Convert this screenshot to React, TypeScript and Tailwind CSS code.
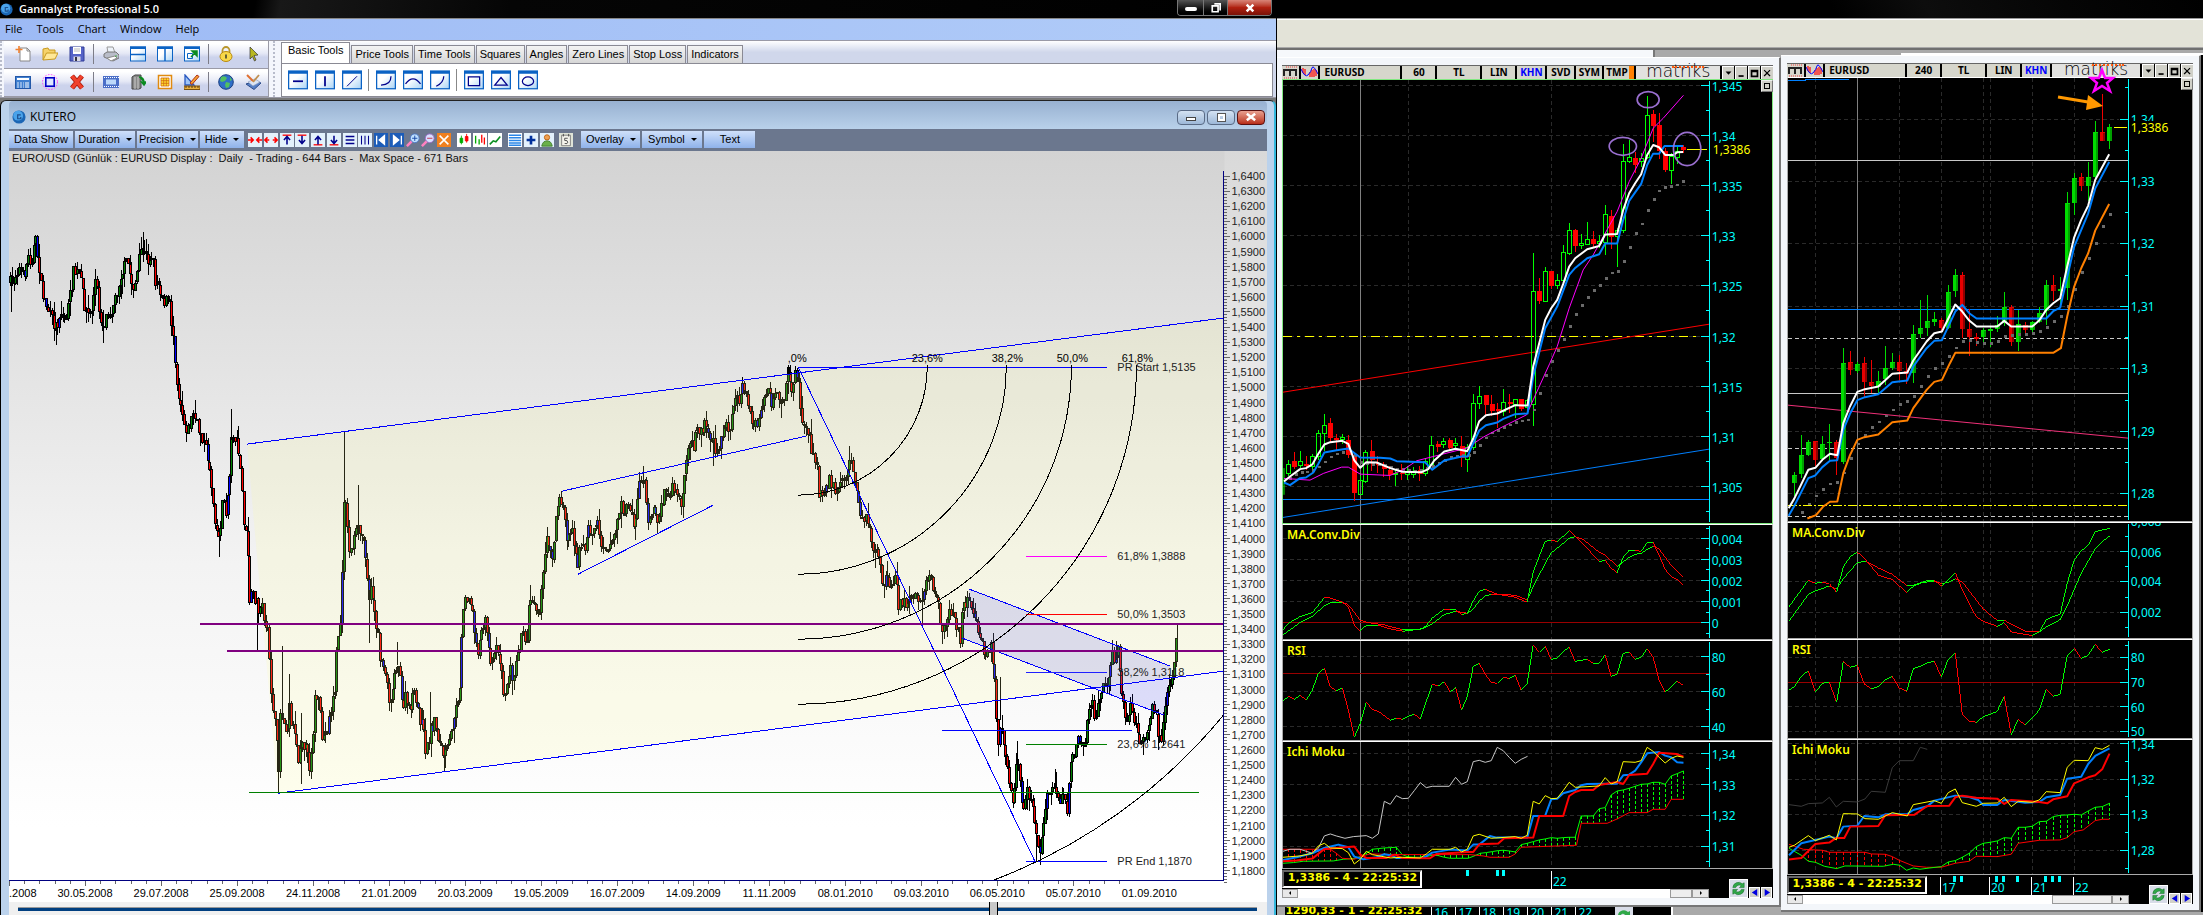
import { useId, type ReactNode } from "react";
import { clsx } from "clsx";

type Pt = [number, number];
// high, body top, body bottom, low, 1 = up / 0 = down
type Bar = [number, number, number, number, 0 | 1];

const parsePoints = (s: string): Pt[] =>
  s.split(" ").map((p) => p.split(",").map(Number) as Pt);

/* ---------- daily chart data ---------- */

const DAILY = parsePoints(
  "9,283 11,284 14,278 18,267 23,277 28,257 31,260 35,240 39,267 41,290 47,307 51,320 56,327 60,310 65,320 69,303 73,273 79,273 84,303 89,317 92,307 96,275 98,307 103,327 107,312 112,307 116,297 120,275 124,268 127,260 131,282 134,287 137,273 141,247 145,257 148,260 152,252 155,280 159,282 163,300 169,302 171,320 174,340 176,373 178,393 181,403 184,423 188,430 193,413 198,430 201,432 205,447 209,463 212,493 216,527 219,540 222,500 226,513 229,477 232,427 235,440 238,450 241,477 244,523 247,547 249,600 253,597 256,597 258,617 260,600 265,620 268,637 270,680 273,707 276,740 278,775 280,713 284,717 287,740 288,697 292,727 295,730 298,760 301,733 305,747 309,767 312,740 315,693 319,707 322,740 327,730 331,707 335,687 337,640 340,623 342,573 344,477 346,507 348,547 351,550 355,537 358,530 362,537 365,547 369,597 372,590 376,623 380,657 384,663 386,677 389,697 393,690 395,663 398,663 402,707 406,697 409,713 413,693 417,707 422,727 426,753 431,727 435,720 439,743 444,757 448,747 452,727 456,700 460,690 462,617 464,593 467,597 471,607 473,613 476,647 479,653 482,623 486,623 489,653 492,663 495,640 499,657 503,690 506,697 510,657 513,680 516,653 522,637 527,637 529,597 533,597 538,613 541,597 544,563 546,543 549,540 553,560 555,520 560,497 564,513 567,540 571,527 575,543 577,567 580,548 584,550 588,530 593,530 597,520 600,540 607,547 612,540 616,527 620,507 627,510 631,507 634,527 637,507 639,480 642,477 645,487 647,517 651,513 654,500 657,527 661,507 665,490 669,497 673,487 677,500 681,500 684,487 686,460 690,450 694,443 698,427 702,433 705,420 708,433 713,443 717,457 720,443 726,423 729,427 733,400 738,400 743,387 746,387 749,413 752,427 757,427 761,407 765,393 769,390 771,410 776,397 781,407 785,397 788,370 791,390 795,375 798,373 800,407 804,430 808,433 812,450 816,460 818,490 821,498 824,487 829,480 833,488 838,487 842,480 845,487 847,463 852,463 856,487 860,520 864,517 867,523 870,533 873,557 877,543 880,570 882,590 886,573 890,593 895,577 898,607 902,600 907,607 910,593 914,593 919,600 922,597 927,577 931,577 935,600 939,610 942,640 946,620 952,607 955,620 960,637 963,607 968,597 971,613 977,627 981,643 986,660 990,643 993,660 995,693 998,740 1000,720 1004,740 1007,767 1009,787 1012,807 1014,787 1017,753 1020,787 1023,807 1026,790 1030,800 1033,807 1036,830 1037,850 1040,847 1043,827 1047,797 1052,787 1056,787 1060,797 1063,787 1067,810 1069,773 1073,757 1077,743 1081,740 1084,750 1087,713 1090,700 1093,703 1095,727 1098,703 1102,690 1107,683 1111,657 1116,657 1118,650 1122,700 1126,720 1131,707 1135,727 1139,743 1144,733 1148,733 1152,710 1156,713 1158,737 1162,737 1166,700 1170,680 1173,673 1176,643 1177,634",
);

const SPIKES: [number, number, number][] = [
  [11, 275, 312], [56, 322, 345], [143, 232, 262], [103, 310, 343], [219, 535, 557],
  [231, 409, 440], [257, 600, 651], [278, 740, 793], [282, 646, 720], [289, 674, 720],
  [301, 713, 784], [344, 432, 500], [358, 485, 540], [369, 590, 643], [430, 692, 740],
  [444, 745, 771], [713, 440, 466], [1000, 677, 720], [1017, 741, 770], [1036, 840, 861],
  [1055, 769, 790], [1116, 641, 660], [1177, 625, 640], [397, 642, 665], [922, 588, 623],
];

const buildDaily = () => {
  const bars: { x: number; top: number; size: number; h: number; l: number; fill: string }[] = [];
  let seed = 7;
  const rnd = () => {
    seed = (seed * 16807) % 2147483647;
    return seed / 2147483647;
  };
  let k = 0;
  let prev = DAILY[0][1];
  for (let i = 0; i < 644; i++) {
    const x = 10 + i * 1.813;
    while (k < DAILY.length - 2 && DAILY[k + 1][0] < x) k++;
    const [x0, y0] = DAILY[k];
    const [x1, y1] = DAILY[k + 1];
    const t = Math.min(1, Math.max(0, (x - x0) / (x1 - x0)));
    const c = y0 + (y1 - y0) * t + (rnd() - 0.5) * 15;
    const h = Math.min(prev, c) - rnd() * rnd() * 16;
    const l = Math.max(prev, c) + rnd() * rnd() * 16;
    const fill = rnd() > 0.87 ? "#0000ff" : c < prev ? "#008000" : "#ff0000";
    bars.push({
      x: Math.round(x),
      top: Math.round(Math.min(prev, c)),
      size: Math.max(2, Math.round(Math.abs(prev - c))),
      h,
      l,
      fill,
    });
    prev = c;
  }
  return bars;
};

const DAILY_BARS = buildDaily();

const DATES = [
  "30.05.2008", "29.07.2008", "25.09.2008", "24.11.2008", "21.01.2009", "20.03.2009",
  "19.05.2009", "16.07.2009", "14.09.2009", "11.11.2009", "08.01.2010", "09.03.2010",
  "06.05.2010", "05.07.2010", "01.09.2010",
];

const RETRACE = [
  { y: 556, color: "#ff00ff", label: "61,8% 1,3888" },
  { y: 614, color: "#ff0000", label: "50,0% 1,3503" },
  { y: 672, color: "#2020ff", label: "38,2% 1,3118" },
  { y: 744, color: "#008000", label: "23,6% 1,2641" },
  { y: 861, color: "#0000ff", label: "PR End 1,1870" },
];

const DailyChart = () => (
  <svg
    viewBox="9 151 1258 751"
    className="block w-full bg-gradient-to-b from-[#d3d3d3] from-0% via-[#f3f3f3] via-55% to-white to-90% font-['Liberation_Sans',Arial,sans-serif] text-[11px]"
  >
    <rect x={1224} y={151} width={43} height={751} fill="#fff" opacity={0.15} />
    <g shapeRendering="crispEdges">
      {DAILY_BARS.map((b, i) => (
        <g key={i}>
          <rect x={b.x} y={b.h} width={1} height={b.l - b.h} />
          <rect x={b.x - 1} y={b.top} width={3} height={b.size} />
        </g>
      ))}
      {DAILY_BARS.filter((b) => b.size > 4).map((b, i) => (
        <rect key={i} x={b.x} y={b.top + 1} width={1} height={b.size - 2} fill={b.fill} />
      ))}
      {SPIKES.map(([x, a, b]) => (
        <rect key={x} x={x} y={a} width={1} height={b - a} />
      ))}
      <rect x={787} y={367} width={4} height={8} />
    </g>

    <polygon points="247,444 1223,318 1223,670 278,793" fill="#ffff8a" opacity={0.15} />
    <polygon points="969,589 1170,666 1164,715 962,638" fill="#1010ff" opacity={0.12} />

    <g fill="none" stroke="#0000ff" shapeRendering="crispEdges">
      <path d="M247 444L1223 318M278 793L1223 671M562 491L806 436M578 574L713 505" />
      <path d="M798 367L1035 862M969 589L1170 666M962 638L1164 715M942 730.5H1132M798 367.5H1107" />
      <path d="M227 651H1223M200 624H1223" stroke="#800080" strokeWidth={2} />
      <path d="M249 792.5H1199" stroke="#008000" />
      {RETRACE.map((r) => (
        <path key={r.y} d={`M1026 ${r.y + 0.5}H1107`} stroke={r.color} />
      ))}
    </g>

    <g fill="none" stroke="#000" shapeRendering="crispEdges">
      {[129, 208, 273, 338].map((r) => (
        <path key={r} d={`M${798 + r} 365A${r} ${r} 0 0 1 798 ${366 + r}`} />
      ))}
      <path d="M1223 715A549 549 0 0 1 993 880" />
    </g>

    <g textAnchor="middle" fill="#000">
      {[[797, ",0%"], [927, "23,6%"], [1007, "38,2%"], [1072, "50,0%"], [1137, "61,8%"]].map(
        ([x, t]) => (
          <text key={t} x={x} y={362}>{t}</text>
        ),
      )}
      {DATES.map((d, i) => (
        <text key={d} x={85 + i * 76} y={897}>{d}</text>
      ))}
    </g>
    <text x={9} y={897}>.2008</text>
    <g fill="#222">
      <text x={1117} y={371}>PR Start 1,5135</text>
      {RETRACE.map((r) => (
        <text key={r.label} x={1117} y={r.y + 4}>{r.label}</text>
      ))}
    </g>
    <text x={12} y={162} className="whitespace-pre" fill="#111">
      {"EURO/USD (Günlük : EURUSD Display :  Daily  - Trading - 644 Bars -  Max Space - 671 Bars"}
    </text>

    <g shapeRendering="crispEdges">
      <path d="M1223.5 171V880M9 880.5H1224" stroke="#000080" />
      {Array.from({ length: 47 }, (_, i) => (
        <g key={i}>
          <path
            d={`M1224 ${176 + i * 15.1}h6M1224 ${179 + i * 15.1}h3M1224 ${182 + i * 15.1}h3M1224 ${185 + i * 15.1}h3M1224 ${188 + i * 15.1}h3`}
            stroke="#666"
          />
          <text x={1231} y={180 + i * 15.1} fill="#222">
            {(1.64 - i * 0.01).toFixed(4).replace(".", ",")}
          </text>
        </g>
      ))}
      {Array.from({ length: 74 }, (_, i) => (
        <path key={i} d={`M${9.5 + i * 15.2} 881v${i % 5 === 0 ? 5 : 3}`} stroke="#666" />
      ))}
    </g>
  </svg>
);

/* ---------- icons ---------- */

const Orb = ({ className }: { className: string }) => (
  <svg viewBox="0 0 16 16" className={className}>
    <circle cx={8} cy={8} r={7.5} fill="#1b66b5" />
    <circle cx={7} cy={6.5} r={5.6} fill="#4aa3ea" />
    <path d="M10 5.5H6.5v4.5H10V8" fill="none" stroke="#1d4f8f" strokeWidth={1.4} />
  </svg>
);

const Ico = ({ children, size = "size-4" }: { children: ReactNode; size?: string }) => (
  <svg viewBox="0 0 16 16" className={clsx("block shrink-0", size)}>
    {children}
  </svg>
);

const Framed = ({ children, size = "size-4" }: { children: ReactNode; size?: string }) => {
  const id = useId();
  return (
    <Ico size={size}>
      <defs>
        <linearGradient id={id} x1="0" y1="0" x2="1" y2="1">
          <stop offset="0.4" stopColor="#fff" />
          <stop offset="1" stopColor="#a9d3f5" />
        </linearGradient>
      </defs>
      <rect x={0.5} y={1} width={15} height={14} fill={`url(#${id})`} stroke="#0a62c4" />
      <rect x={0} y={0.5} width={16} height={2.5} fill="#0a62c4" />
      {children}
    </Ico>
  );
};

const ROW_ONE: (ReactNode | null)[] = [
  <Ico><path d="M5 2h7l3 3v10H5z" fill="#fff" stroke="#888" /><path d="M12 2v3h3" fill="none" stroke="#888" /><path d="M4 0v7M.5 3.5h7" stroke="#f08030" strokeWidth={1.6} /></Ico>,
  <Ico><path d="M1 14V3l5-1 1 2h6v3" fill="#f6d36b" stroke="#c89a20" /><path d="M1 14L4.5 7H16l-3 6z" fill="#ffe897" stroke="#c89a20" /></Ico>,
  <Ico><path d="M1 1h14v14H1z" fill="#5563c8" stroke="#303c96" /><path d="M4 1h8v7H4z" fill="#fff" /><path d="M5 3h6M5 5h6" stroke="#bbb" /><path d="M4.500 10.500h7V15h-7z" fill="#d8d8e4" /><path d="M6 11h2v4H6z" fill="#334" /></Ico>,
  null,
  <Ico><path d="M5 7L4 1h6l2 6" fill="#eef3fa" stroke="#999" /><path d="M1 8l3-2h9l3 3v3l-6 3-9-4z" fill="#b9bdc9" stroke="#777" /><path d="M4 12l8-2 2 2-6 3z" fill="#fff" stroke="#888" /><circle cx={13} cy={10} r={0.8} fill="#3a3" /></Ico>,
  <Framed><path d="M0 8.500h16" stroke="#0a62c4" strokeWidth={1.5} /></Framed>,
  <Framed><path d="M8 2v13" stroke="#0a62c4" strokeWidth={1.5} /></Framed>,
  <Framed><path d="M3.500 7.500h5v5h-5z" fill="none" stroke="#0a62c4" /><path d="M7 11l4-4M8 5h5v5z" stroke="#0a8a20" fill="#0a8a20" strokeWidth={1.5} /></Framed>,
  null,
  <Ico><path d="M4.500 7V4.500a3.500 3.500 0 017 0V7" fill="none" stroke="#b8962c" strokeWidth={1.8} /><ellipse cx={8} cy={10.500} rx={6} ry={5} fill="#f8d848" stroke="#b88a10" /><path d="M8 8.500v4" stroke="#553" strokeWidth={1.8} /></Ico>,
  <Ico><path d="M5 1l8 8-4 .5L11 14l-1.500 1L7.500 10.500 5 13z" fill="#b8b820" stroke="#333" strokeWidth={0.7} /></Ico>,
];

const ROW_TWO: (ReactNode | null)[] = [
  <Ico><rect x={0.5} y={2.500} width={15} height={12} fill="#3f7fd0" stroke="#2358a8" /><path d="M2 5h12" stroke="#fff" strokeWidth={2} /><path d="M2 9h7M2 11h7M2 13h7" stroke="#dbe8fa" strokeDasharray="2 1" /><path d="M10 9h4M10 11h4M10 13h4" stroke="#fff" /></Ico>,
  <Ico><circle cx={8} cy={8} r={7.500} fill="none" stroke="#ff40ff" strokeDasharray="1.500 1.500" /><rect x={3.800} y={3.800} width={8.400} height={8.400} fill="#dfe6ff" stroke="#0000c8" strokeWidth={1.600} /></Ico>,
  <Ico><path d="M3 2l10 12M13 2L3 14" stroke="#a81808" strokeWidth={5} /><path d="M3 2l10 12M13 2L3 14" stroke="#f0412c" strokeWidth={3.500} /></Ico>,
  null,
  <Ico><rect y={2} width={16} height={12} fill="#4a6ec8" /><path d="M3 5.500h10v5H3z" fill="#bcd8fa" /><path d="M1 3.500h15M1 12.500h15" stroke="#fff" strokeDasharray="1 1" strokeWidth={1.200} /></Ico>,
  <Ico><path d="M2 3l3-2h6v13l-2 1H2z" fill="#888" stroke="#444" /><path d="M5 3v12M8 3v12" stroke="#ccc" /><path d="M9 3q5 0 5 6m-2.500-1l2.500 3 2-3z" fill="#0a8a20" stroke="#0a8a20" strokeWidth={1.600} /></Ico>,
  <Ico><rect x={1.500} y={1.500} width={13} height={13} fill="#fff" stroke="#e08a10" strokeWidth={1.500} /><path d="M4 4h8v8H4z" fill="#ffe030" /><path d="M4 6.700h8M4 9.300h8M6.700 4v8M9.300 4v8M4 4h8v8H4z" stroke="#d06810" strokeWidth={0.8} fill="none" /></Ico>,
  <Ico><path d="M1 1l9 10H1z" fill="#9fc4f4" stroke="#2858c0" strokeWidth={1.300} /><path d="M6 9l7-8 2 1.500-7 8z" fill="#f4a030" stroke="#b03018" /><path d="M0 12h16v3.500H0z" fill="#e8b040" stroke="#7a5010" /><path d="M2 12v2M5 12v2M8 12v2M11 12v2M14 12v2" stroke="#5a3808" /></Ico>,
  null,
  <Ico><circle cx={8} cy={8} r={7.300} fill="#2f6fc8" stroke="#1c3f80" /><path d="M3 3q4-2 6 1l-2 3-3 1-2-1zM8 8l4 1-1 4-3 1-1-3zM12 3l2 3-2 1z" fill="#52c060" /></Ico>,
  <Ico><path d="M1 10l9-3 6 2-7 6.500z" fill="#5580c8" stroke="#2c4a88" /><path d="M3 8l7-3 5 3-7 4z" fill="#dbe4f4" stroke="#8898b8" strokeWidth={0.6} /><path d="M2 1l6 6" stroke="#e07030" strokeWidth={2} /><path d="M14 1L8 8" stroke="#c09050" strokeWidth={1.800} /></Ico>,
];

const DRAW_TOOLS: (ReactNode | null)[] = [
  <path d="M4 9h8" strokeWidth={1.4} />,
  <path d="M8 5v8" strokeWidth={1.4} />,
  <path d="M4 13l8-8" strokeWidth={0.8} />,
  null,
  <path d="M12 5q0 7-8 7" />,
  <path d="M2 11q6-8 12 0" />,
  <path d="M11 5q0 5-6 8" />,
  null,
  <path d="M3.500 5.500h9v7h-9z" />,
  <path d="M8 6l5 6H3z" />,
  <ellipse cx={8} cy={9} rx={4.500} ry={3.500} />,
];

const ToolRow = ({ items }: { items: (ReactNode | null)[] }) => (
  <div className="flex h-7 items-center border-b border-[#9a9aa6] bg-gradient-to-b from-white from-10% via-[#e6e9f6] via-45% to-[#ccd3ec] to-60% pl-[5px]">
    {items.map((icon, i) =>
      icon === null ? (
        <span key={i} className="mx-[3px] h-5 w-px bg-[#7d7d88]" />
      ) : (
        <button key={i} type="button" className="flex w-[27px] justify-center">
          {icon}
        </button>
      ),
    )}
  </div>
);

const Grip = () => (
  <div className="w-1 shrink-0 self-stretch border-l-2 border-dotted border-[#b8bccb]" />
);

const arrowV = (up: boolean, barTop: boolean) => (
  <>
    <path d={barTop ? "M3 2.500h10" : "M3 13.500h10"} stroke="#f00" strokeWidth={1.500} />
    <path d={up ? "M8 13V4M4.500 8L8 4l3.500 4" : "M8 3v9M4.500 8L8 12l3.500-4"} stroke="#00008b" strokeWidth={1.800} fill="none" />
  </>
);

const CHART_ICONS: { bg: string; art: ReactNode }[] = [
  { bg: "bg-[#e3f1fc]", art: <path d="M0 8h5M3 5l3 3-3 3M16 8h-5M13 5l-3 3 3 3" stroke="#f00" strokeWidth={1.700} fill="none" /> },
  { bg: "bg-[#e3f1fc]", art: <path d="M1 8h5M10 8h5M4 5L1 8l3 3M12 5l3 3-3 3" stroke="#f00" strokeWidth={1.700} fill="none" /> },
  { bg: "bg-[#e3f1fc]", art: arrowV(true, true) },
  { bg: "bg-[#e3f1fc]", art: arrowV(false, true) },
  { bg: "bg-[#e3f1fc]", art: arrowV(true, false) },
  { bg: "bg-[#e3f1fc]", art: arrowV(false, false) },
  { bg: "bg-[#e3f1fc]", art: <path d="M3 4h10M3 8h10M3 12h10" stroke="#00008b" strokeWidth={1.500} /> },
  { bg: "bg-[#e3f1fc]", art: <path d="M4 3v10M8 3v10M12 3v10" stroke="#00008b" strokeWidth={1.200} /> },
  { bg: "bg-[#1c5cb8]", art: <path d="M3 3v10M12 3L6 8l6 5z" fill="#fff" stroke="#fff" strokeWidth={1.500} /> },
  { bg: "bg-[#1c5cb8]", art: <path d="M13 3v10M4 3l6 5-6 5z" fill="#fff" stroke="#fff" strokeWidth={1.500} /> },
  { bg: "", art: <><path d="M1 15l6-6" stroke="#ff80c0" strokeWidth={3} /><circle cx={10} cy={6} r={5} fill="#bfe0ff" stroke="#4a78c8" /><path d="M10 3v6M7 6h6" stroke="#1040a0" /></> },
  { bg: "", art: <><path d="M1 15l6-6" stroke="#ff80c0" strokeWidth={3} /><circle cx={10} cy={6} r={5} fill="#d8e0ff" stroke="#9a6ac8" /><path d="M7 6h6" stroke="#c02040" /></> },
  { bg: "bg-[#f08020]", art: <path d="M3 3l10 10M13 3L3 13" stroke="#fff" strokeWidth={1.800} /> },
  { bg: "bg-white ml-1", art: <><path d="M5 3v10M3.500 6h3v5h-3z" fill="#0a0" stroke="#0a0" /><path d="M11 1v10M9.500 4h3v5h-3z" fill="#f00" stroke="#f00" /></> },
  { bg: "bg-white", art: <><path d="M3 3v9M7 7v6" stroke="#0a0" strokeWidth={1.500} /><path d="M10 2v9M13 5v8" stroke="#f00" strokeWidth={1.500} /></> },
  { bg: "bg-white", art: <path d="M2 13l4-4 3 1 5-6" fill="none" stroke="#0a9020" strokeWidth={1.800} /> },
  { bg: "bg-white ml-1", art: <path d="M1 2.500h14M1 5.500h14M1 8.500h14M1 11.500h14M1 14h14" stroke="#2a86e8" strokeWidth={1.700} /> },
  { bg: "bg-[#e3f1fc]", art: <path d="M8 3v10M3 8h10" stroke="#00309b" strokeWidth={3} /> },
  { bg: "bg-[#e3f1fc]", art: <><circle cx={8} cy={5} r={3} fill="#f0a050" stroke="#b86010" /><path d="M2 15q1-6 6-6t6 6z" fill="#6ab04a" stroke="#3a7a28" /></> },
  { bg: "bg-[#dfe4d8] ml-1", art: <><path d="M3 2.500h10v12H3z" fill="#f4f4ec" stroke="#777" /><path d="M10 6H6.500v2.500q3.500-.500 3.500 2t-3.500 1.500M5 1v3M11 1v3" fill="none" stroke="#444" /></> },
];

/* ---------- Gannalyst window ---------- */

const TABS = ["Basic Tools", "Price Tools", "Time Tools", "Squares", "Angles", "Zero Lines", "Stop Loss", "Indicators"];

const DropButton = ({ label, width, arrow = true }: { label: string; width: string; arrow?: boolean }) => (
  <button
    type="button"
    className={clsx(
      "flex h-[17px] items-center justify-center gap-1.5 bg-gradient-to-b from-[#cfe0fa] to-[#8fb2ea] text-[11px] leading-none whitespace-nowrap",
      width,
    )}
  >
    {label}
    {arrow && <span className="border-x-[3px] border-t-[3px] border-x-transparent border-t-black" />}
  </button>
);

const Gannalyst = () => (
  <section className="flex min-w-0 flex-[1277] flex-col border-r border-black bg-white font-['Liberation_Sans',Arial,sans-serif] text-[11px] text-black">
    <header className="flex h-[19px] items-start justify-between border-b border-[#888] bg-[linear-gradient(100deg,#000_20%,#181818_22%,#050505_40%,#000)] pr-1">
      <div className="flex h-[19px] items-center gap-1.5 font-['Open_Sans',sans-serif] text-[11px] font-semibold text-white">
        <Orb className="size-[13px]" />
        Gannalyst Professional 5.0
      </div>
      <div className="flex h-4 overflow-hidden rounded-b border border-t-0 border-[#777]">
        <button type="button" aria-label="Minimize" className="flex w-[25px] items-end justify-center bg-gradient-to-b from-[#555] to-black pb-1">
          <span className="h-1 w-3 rounded-sm bg-white" />
        </button>
        <button type="button" aria-label="Restore" className="flex w-[25px] items-center justify-center border-x border-[#777] bg-gradient-to-b from-[#555] to-black">
          <svg viewBox="0 0 12 12" className="size-[10px]"><path d="M4 1h7v8M1.500 3.500h7v7h-7z" fill="none" stroke="#fff" strokeWidth={2} /></svg>
        </button>
        <button type="button" aria-label="Close" className="flex w-[43px] items-center justify-center bg-gradient-to-b from-[#d88478] via-[#b02010] to-[#7a1208]">
          <svg viewBox="0 0 12 12" className="size-[10px]"><path d="M2 2l8 8M10 2l-8 8" stroke="#fff" strokeWidth={3} /></svg>
        </button>
      </div>
    </header>

    <nav className="flex h-[21px] items-center gap-[14px] bg-gradient-to-r from-[#9dbaf5] to-[#b1ccf8] pl-[5px] font-['Open_Sans',sans-serif] text-[11px] font-medium">
      {["File", "Tools", "Chart", "Window", "Help"].map((m) => (
        <button key={m} type="button">{m}</button>
      ))}
    </nav>

    <div className="flex border-y border-[#9a9aa6] bg-[#f4f6fc]">
      <Grip />
      <div className="w-[264px] shrink-0">
        <ToolRow items={ROW_ONE} />
        <ToolRow items={ROW_TWO} />
      </div>
      <div className="w-px bg-[#9a9aa6]" />
      <div className="flex w-3 pl-1"><Grip /></div>
      <div className="flex min-w-0 flex-1 flex-col bg-gradient-to-b from-white to-[#d0d7eb] to-20% pr-[3px]">
        <div className="flex h-[22px] items-end gap-px" role="tablist">
          {TABS.map((t, i) => (
            <button
              key={t}
              type="button"
              role="tab"
              aria-selected={i === 0}
              className={clsx(
                "border border-b-0 border-[#8a8a94] leading-none whitespace-nowrap",
                i === 0
                  ? "h-[21px] bg-white px-[6px] pb-1"
                  : "h-[18px] bg-gradient-to-b from-[#f4f4f4] to-[#d6d6d6] px-[3px]",
              )}
            >
              {t}
            </button>
          ))}
        </div>
        <div className="flex flex-1 items-center border border-[#8a8a94] bg-white pl-[2px]">
          {DRAW_TOOLS.map((art, i) =>
            art === null ? (
              <span key={i} className="mx-[3px] h-[22px] w-px bg-[#888]" />
            ) : (
              <button key={i} type="button" className="flex w-[27px] justify-center">
                <Framed size="size-5">
                  <g fill="none" stroke="#00008b" strokeWidth={1}>{art}</g>
                </Framed>
              </button>
            ),
          )}
        </div>
      </div>
    </div>

    <div className="flex flex-1 flex-col bg-[#777] pt-[2px]">
      <div className="flex flex-1 flex-col rounded-t-md border-t border-r-2 border-l border-t-[#222] border-r-[#35b8dc] border-l-black bg-[#bbd2ec] pr-[7px] pl-2">
        <div className="flex h-[28px] items-center justify-between rounded-t bg-gradient-to-b from-[#98b1d1] to-[#b9d1ea] pt-[5px] pr-[2px] pl-[3px]">
          <div className="flex items-center gap-1 font-['Open_Sans',sans-serif] text-[12px]">
            <Orb className="size-[14px]" />
            KUTERO
          </div>
          <div className="flex gap-[2px]">
            <button type="button" aria-label="Minimize chart" className="flex h-[15px] w-7 items-end justify-center rounded-sm border border-[#5a6b86] bg-gradient-to-b from-[#d4e2f2] to-[#9db8d8] pb-[3px]">
              <span className="h-[4px] w-[10px] border border-[#444] bg-white" />
            </button>
            <button type="button" aria-label="Maximize chart" className="flex h-[15px] w-7 items-center justify-center rounded-sm border border-[#5a6b86] bg-gradient-to-b from-[#d4e2f2] to-[#9db8d8]">
              <span className="size-[7px] border-2 border-white outline outline-[#555]" />
            </button>
            <button type="button" aria-label="Close chart" className="flex h-[15px] w-7 items-center justify-center rounded-sm border border-[#5a1010] bg-gradient-to-b from-[#e8a090] to-[#b82c18]">
              <svg viewBox="0 0 12 12" className="size-[10px]"><path d="M1 2l10 8M11 2L1 10" stroke="#fff" strokeWidth={3} /></svg>
            </button>
          </div>
        </div>

        <div className="flex h-[22px] items-center gap-[2px] bg-[#6b778e]">
          <DropButton label="Data Show" width="w-16" arrow={false} />
          <DropButton label="Duration" width="w-[60px]" />
          <DropButton label="Precision" width="w-[61px]" />
          <DropButton label="Hide" width="w-11" />
          <div className="flex flex-1 items-center justify-between pr-[6px] pl-[2px]">
            {CHART_ICONS.map((c, i) => (
              <button key={i} type="button" className={clsx("flex size-[14px] items-center justify-center", c.bg)}>
                <Ico size="size-[14px]">{c.art}</Ico>
              </button>
            ))}
          </div>
          <DropButton label="Overlay" width="w-[59px]" />
          <DropButton label="Symbol" width="w-[60px]" />
          <DropButton label="Text" width="w-[51px]" arrow={false} />
          <div className="w-[510px]" />
        </div>

        <DailyChart />

        <div className="flex h-[13px] items-center overflow-hidden bg-[#f0f0f0] pr-[10px] pl-[9px]">
          <input
            type="range"
            aria-label="Chart position"
            min={0}
            max={1000}
            defaultValue={789}
            className="h-1 w-full appearance-none border-t border-[#999] bg-[#003f80] [&::-webkit-slider-thumb]:h-5 [&::-webkit-slider-thumb]:w-[9px] [&::-webkit-slider-thumb]:appearance-none [&::-webkit-slider-thumb]:border [&::-webkit-slider-thumb]:border-black [&::-webkit-slider-thumb]:bg-[#c8c8c8]"
          />
        </div>
      </div>
    </div>
  </section>
);

/* ---------- Matriks windows ---------- */

// Plot shapes use a grid three times finer than the text around them.
type PanelProps = {
  x0: number;
  y0: number;
  width: number;
  height: number;
  axis: number;
  verticals: number[];
  cross: number;
  ticks: [number, string][];
  minor?: number[];
  title?: string;
  frame?: string;
  children: ReactNode;
  extra?: ReactNode;
};

const Panel = (p: PanelProps) => (
  <div className={clsx("border bg-black", p.frame ?? "border-t-white border-r-[#aaa] border-b-[#aaa] border-l-[#aaa]")}>
    <svg
      viewBox={`0 0 ${p.width} ${p.height}`}
      className={clsx("block w-full font-['Noto_Sans',sans-serif] text-[12px]", p.frame && "overflow-visible")}
    >
      <g transform={`scale(0.33333) translate(${-p.x0} ${-p.y0})`} fill="none" strokeWidth={3}>
        <g stroke="#2a2a2a" strokeDasharray="12 9" shapeRendering="crispEdges">
          {p.verticals.map((x) => (
            <path key={x} d={`M${x} ${p.y0}v${p.height * 3}`} />
          ))}
          {p.ticks.map(([y]) => (
            <path key={y} d={`M${p.x0} ${y}H${p.axis - 28}`} />
          ))}
        </g>
        <path d={`M${p.cross} ${p.y0}v${p.height * 3}`} stroke="#808080" shapeRendering="crispEdges" />
        {p.children}
        <g stroke="#00ffff" shapeRendering="crispEdges">
          <path d={`M${p.axis} ${p.y0 + 3}v${p.height * 3 - 6}`} />
          {p.ticks.map(([y]) => (
            <path key={y} d={`M${p.axis - 25} ${y}h25`} />
          ))}
          {p.minor?.map((y) => <path key={y} d={`M${p.axis - 10} ${y}h10`} />)}
        </g>
      </g>
      <g fill="#00ffff">
        {p.ticks.map(([y, t]) => (
          <text key={y} x={Math.round((p.axis + 9 - p.x0) / 3)} y={Math.round((y - p.y0) / 3) + 5}>
            {t}
          </text>
        ))}
      </g>
      {p.title && (
        <text x={4} y={14} fill="#ffff00" className="font-semibold">
          {p.title}
        </text>
      )}
      {p.extra}
    </svg>
  </div>
);

const Line = ({ pts, color, w = 3 }: { pts: string; color: string; w?: number }) => (
  <polyline points={pts} stroke={color} strokeWidth={w} strokeLinejoin="round" shapeRendering={w > 3 ? undefined : "crispEdges"} />
);

// green while rising, red while falling
const TrendLine = ({ pts }: { pts: string }) => {
  const list = parsePoints(pts);
  return (
    <g shapeRendering="crispEdges">
      {list.slice(1).map(([x, y], i) => (
        <path key={i} d={`M${list[i][0]} ${list[i][1]}L${x} ${y}`} stroke={y > list[i][1] ? "#ff0000" : "#00ff00"} />
      ))}
    </g>
  );
};

const Dots = ({ pts }: { pts: string }) => (
  <g fill="#6a6a6a" shapeRendering="crispEdges">
    {parsePoints(pts).map(([x, y]) => (
      <rect key={x} x={x - 4} y={y - 4} width={9} height={8} />
    ))}
  </g>
);

const Hatch = ({ top, bottom, color }: { top: string; bottom: string; color: string }) => {
  const b = parsePoints(bottom);
  const at = (x: number) => {
    const i = Math.max(1, b.findIndex((p) => p[0] >= x));
    const [x0, y0] = b[i - 1];
    const [x1, y1] = b[i];
    return y0 + ((y1 - y0) * (x - x0)) / (x1 - x0);
  };
  const t = parsePoints(top);
  return (
    <g stroke={color} strokeDasharray="9 6" shapeRendering="crispEdges">
      {t.map(([x, y]) => (
        <path key={x} d={`M${x} ${y}V${at(x)}`} />
      ))}
    </g>
  );
};

const HOURLY: Bar[] = [
  [1262, 1273, 1301, 1310, 1], [1236, 1263, 1281, 1288, 0], [1233, 1264, 1276, 1285, 1], [1248, 1272, 1280, 1290, 0],
  [1242, 1251, 1280, 1290, 1], [1170, 1180, 1250, 1262, 1], [1122, 1156, 1180, 1235, 1], [1134, 1150, 1196, 1210, 0],
  [1182, 1195, 1200, 1230, 0], [1182, 1192, 1200, 1212, 1], [1186, 1200, 1246, 1255, 0], [1240, 1246, 1360, 1383, 0],
  [1310, 1321, 1363, 1363, 1], [1230, 1237, 1324, 1330, 1], [1200, 1234, 1260, 1295, 0], [1250, 1270, 1275, 1300, 0],
  [1266, 1276, 1288, 1312, 0], [1280, 1290, 1305, 1322, 0], [1290, 1300, 1304, 1340, 1], [1272, 1299, 1304, 1320, 0],
  [1280, 1298, 1304, 1320, 1], [1283, 1298, 1303, 1316, 1], [1280, 1290, 1304, 1325, 0], [1255, 1265, 1300, 1310, 1],
  [1190, 1216, 1273, 1275, 1], [1205, 1212, 1222, 1236, 0], [1196, 1204, 1214, 1225, 1], [1196, 1201, 1226, 1230, 0],
  [1196, 1210, 1218, 1225, 1], [1188, 1218, 1256, 1283, 0], [1212, 1222, 1259, 1298, 1], [1062, 1090, 1222, 1230, 1],
  [1038, 1070, 1090, 1108, 1], [1064, 1066, 1094, 1130, 0], [1066, 1092, 1112, 1130, 0], [1088, 1108, 1114, 1165, 0],
  [1048, 1087, 1115, 1130, 1], [1062, 1086, 1092, 1120, 0], [1076, 1079, 1094, 1136, 1], [1076, 1078, 1106, 1115, 0],
  [1078, 1083, 1104, 1110, 1], [638, 754, 1094, 1158, 1], [713, 754, 782, 792, 0], [680, 694, 784, 786, 1],
  [692, 694, 738, 746, 0], [703, 721, 738, 748, 1], [616, 637, 722, 735, 1], [548, 571, 641, 645, 1],
  [568, 570, 617, 635, 0], [582, 610, 617, 628, 1], [545, 598, 613, 615, 1], [572, 597, 611, 620, 0],
  [585, 606, 610, 625, 1], [495, 523, 608, 645, 1], [510, 528, 590, 627, 0], [565, 571, 590, 682, 1],
  [312, 364, 571, 578, 1], [300, 352, 364, 370, 1], [335, 354, 374, 400, 0], [340, 356, 364, 380, 1],
  [168, 226, 352, 357, 1], [210, 222, 257, 305, 0], [220, 255, 334, 357, 0], [325, 334, 389, 396, 0],
  [340, 349, 391, 432, 1], [318, 334, 352, 372, 1], [316, 320, 329, 338, 0],
];

const FOUR_HOUR: Bar[] = [
  [1296, 1305, 1331, 1370, 1], [1185, 1245, 1304, 1316, 1], [1200, 1206, 1245, 1248, 1], [1203, 1203, 1261, 1280, 0],
  [1190, 1213, 1258, 1265, 1], [1152, 1207, 1211, 1260, 1], [1200, 1206, 1255, 1305, 0], [924, 969, 1266, 1274, 1],
  [933, 966, 991, 1005, 0], [966, 972, 992, 1000, 1], [952, 969, 1026, 1070, 0], [960, 1026, 1037, 1060, 0],
  [992, 1023, 1040, 1062, 1], [918, 985, 1018, 1035, 1], [940, 966, 984, 990, 1], [945, 966, 994, 1020, 0],
  [968, 992, 1002, 1032, 0], [855, 883, 998, 1028, 1], [780, 864, 881, 893, 1], [765, 843, 864, 888, 1],
  [815, 838, 846, 858, 1], [835, 839, 864, 875, 0], [735, 756, 864, 868, 1], [687, 706, 752, 770, 1],
  [696, 706, 866, 893, 0], [808, 867, 891, 947, 0], [880, 890, 896, 917, 0], [865, 871, 890, 905, 1],
  [858, 866, 872, 920, 1], [828, 856, 866, 875, 1], [756, 801, 850, 858, 1], [795, 801, 906, 918, 0],
  [810, 853, 905, 932, 1], [846, 856, 870, 880, 0], [842, 846, 870, 875, 1], [802, 820, 846, 850, 1],
  [720, 736, 812, 856, 1], [705, 736, 754, 782, 0], [712, 748, 752, 800, 1], [456, 490, 743, 780, 1],
  [400, 415, 489, 525, 1], [400, 412, 438, 452, 0], [366, 411, 438, 484, 1], [243, 276, 410, 420, 1],
  [162, 276, 302, 302, 0], [252, 262, 302, 326, 1],
];

const HourlyPlot = () => (
  <>
    <path d="M39 890H1318" stroke="#ffff00" strokeDasharray="27 15 9 15" shapeRendering="crispEdges" />
    <Line pts="39,1057 1318,853" color="#ff0000" />
    <Line pts="39,1433 1318,1228" color="#0080ff" />
    <path d="M39 1379H1318" stroke="#0080ff" shapeRendering="crispEdges" />
    <path d="M42 1285V1365" stroke="#00ff00" />
    <g shapeRendering="crispEdges">
      {HOURLY.map(([h, t, b, l, up], i) => {
        const x = 55 + Math.round(i * 17.96);
        return up ? (
          <g key={i} stroke="#00ff00">
            <path d={`M${x} ${h}V${t}M${x} ${b}V${l}`} />
            <rect x={x - 6} y={t} width={12} height={Math.max(3, b - t)} />
          </g>
        ) : (
          <g key={i} stroke="#ff0000">
            <path d={`M${x} ${h}V${l}`} />
            <rect x={x - 7} y={t} width={15} height={Math.max(3, b - t)} fill="#ff0000" stroke="none" />
          </g>
        );
      })}
    </g>
    <Dots pts="60,1316 78,1305 96,1299 112,1297 130,1292 148,1282 166,1267 184,1252 202,1243 220,1238 256,1248 274,1268 292,1273 310,1275 328,1275 346,1278 364,1282 382,1288 400,1290 418,1292 436,1294 454,1292 472,1285 490,1280 508,1272 526,1262 544,1254 562,1250 580,1248 597,1248 614,1239 632,1217 650,1195 668,1180 686,1172 703,1163 721,1156 740,1148 758,1144 775,1141 794,1111 812,1060 829,1006 847,965 865,931 883,898 901,860 919,823 937,797 955,772 973,751 991,737 1009,715 1027,699 1045,694 1063,664 1081,622 1099,580 1117,552 1135,512 1153,478 1170,453 1188,442 1206,440 1224,435 1242,424" />
    <Line pts="42,1316 120,1321 160,1301 215,1282 235,1282 271,1303 360,1307 400,1290 440,1263 510,1245 590,1225 640,1192 700,1160 770,1125 790,1080 840,970 862,920 898,805 940,690 970,645 1006,580 1042,515 1078,425 1114,355 1150,265 1180,235 1241,166" color="#ff00ff" />
    <Line pts="42,1328 60,1336 90,1315 108,1313 130,1298 145,1272 163,1238 200,1231 235,1226 271,1253 330,1254 361,1256 380,1264 465,1267 487,1290 523,1262 575,1250 593,1250 610,1210 628,1172 648,1156 682,1148 700,1137 736,1123 773,1121 790,1010 826,865 862,800 898,705 916,684 952,655 988,643 1006,611 1042,611 1060,540 1078,483 1114,432 1132,375 1150,341 1168,341 1184,318 1240,318" color="#0080ff" w={6} />
    <Line pts="42,1325 60,1310 90,1288 108,1285 127,1274 145,1242 163,1214 181,1207 217,1203 235,1212 253,1262 271,1284 289,1267 320,1268 361,1285 397,1296 455,1297 475,1288 493,1262 523,1235 557,1227 592,1234 610,1196 628,1144 648,1126 682,1121 736,1096 773,1097 790,980 826,840 844,805 862,780 880,732 898,680 916,655 952,628 988,618 1006,584 1042,582 1060,510 1078,460 1096,430 1114,403 1132,345 1150,315 1168,322 1186,345 1210,345 1222,337 1240,336" color="#ffffff" w={6} />
    <path d="M1252 328H1312" stroke="#ffff00" shapeRendering="crispEdges" />
    <g stroke="#9a6fd0" strokeWidth={5}>
      <ellipse cx={1135} cy={179} rx={33} ry={24} />
      <ellipse cx={1059} cy={319} rx={41} ry={27} />
      <ellipse cx={1252} cy={327} rx={41} ry={50} />
    </g>
  </>
);

const FourHourPlot = () => (
  <>
    <g shapeRendering="crispEdges" stroke="#c8c8c8">
      <path d="M54 361H1075M54 1060H1075" />
      <path d="M54 895H1075M54 1225H1075M54 1429H1075" strokeDasharray="12 9" />
      <path d="M54 1396H1075" stroke="#ffff00" strokeDasharray="27 6 6 6" />
      <path d="M54 808H1075M54 121H108V118H237" stroke="#0080ff" />
    </g>
    <Line pts="54,1096 1075,1195" color="#f03078" />
    <g shapeRendering="crispEdges">
      {FOUR_HOUR.map(([h, t, b, l, up], i) => {
        const x = 73 + i * 21;
        return (
          <g key={i} stroke={up ? "#00dd00" : "#f00000"}>
            <path d={`M${x} ${h}V${l}`} />
            <rect x={x - 7} y={t} width={15} height={Math.max(4, b - t)} fill={up ? "#00dd00" : "#e80000"} stroke="none" />
            {b - t > 8 && (
              <rect x={x + 2} y={t + 3} width={6} height={b - t - 3} fill={up ? "#00a000" : "#900000"} stroke="none" />
            )}
          </g>
        );
      })}
    </g>
    <Dots pts="97,1419 118,1393 139,1369 160,1350 181,1333 202,1328 223,1300 244,1256 265,1213 286,1187 307,1164 328,1147 349,1129 370,1110 391,1094 412,1084 433,1069 454,1040 475,1010 496,985 517,970 538,949 559,924 580,904 601,901 622,907 643,910 664,910 685,904 706,889 727,887 748,884 769,883 790,880 811,874 832,862 853,844 874,829 895,800 916,748 937,697 958,655 979,610 1000,559 1021,523" />
    <Line pts="112,1436 138,1426 160,1400 180,1386 202,1385 220,1300 240,1246 262,1200 283,1192 325,1184 367,1147 412,1142 430,1105 470,1050 493,1026 516,1020 540,970 556,939 850,939 873,925 892,830 913,740 934,685 955,640 976,572 1018,492" color="#ff8000" w={6} />
    <Line pts="56,1428 72,1400 115,1315 136,1307 157,1282 180,1263 202,1261 220,1170 240,1122 262,1081 285,1072 325,1063 367,1027 412,1022 430,980 470,925 493,903 516,901 556,815 577,795 598,820 620,836 829,836 850,814 871,803 892,712 913,620 955,520 976,446 1018,366" color="#0080ff" w={6} />
    <Line pts="56,1405 72,1378 115,1290 136,1284 157,1260 180,1242 202,1246 220,1150 240,1100 262,1056 285,1048 325,1040 367,1002 412,998 430,962 470,905 493,880 516,875 556,794 577,815 598,842 620,860 682,860 703,843 724,860 787,860 808,842 829,810 850,790 871,775 892,680 913,592 934,540 955,497 976,420 1018,343" color="#ffffff" w={6} />
    <path d="M1032 262H1071" stroke="#ffff00" shapeRendering="crispEdges" />
  </>
);

const MID_MACD_A = "39,360 55,340 90,320 127,308 163,263 181,264 217,276 235,292 253,345 271,363 289,346 325,346 361,357 400,364 455,357 470,346 487,324 523,298 540,300 557,299 575,314 592,310 610,273 628,244 646,238 682,253 736,262 772,277 790,185 826,94 844,91 862,94 880,79 898,62 916,78 952,115 988,155 1006,151 1024,175 1042,188 1060,142 1078,121 1096,121 1114,124 1132,97 1150,97 1168,136 1186,178 1204,200 1222,209 1241,226";
const MID_MACD_B = "39,375 90,338 127,319 163,288 181,279 217,277 235,284 271,331 289,337 343,345 397,359 455,357 487,342 523,314 557,304 592,310 610,298 628,273 646,258 664,253 720,255 736,256 772,270 790,230 826,160 844,129 880,100 898,85 916,80 940,88 988,127 1006,135 1042,169 1060,156 1078,142 1096,133 1114,130 1132,118 1150,109 1168,118 1204,165 1241,202";
const MID_RSI = "39,574 55,559 73,568 91,556 109,571 127,540 145,490 163,475 181,530 199,542 217,533 235,600 253,682 271,640 289,577 307,598 325,604 361,631 379,625 397,628 415,619 433,613 451,626 487,523 505,528 523,515 541,546 557,533 575,600 592,560 610,469 628,460 646,493 664,517 682,520 700,502 718,505 736,496 754,541 772,520 790,404 808,427 826,409 844,448 862,445 880,424 898,412 916,454 952,448 970,460 988,460 1006,434 1024,499 1042,493 1060,430 1078,427 1096,448 1114,442 1132,416 1150,442 1168,511 1186,547 1204,530 1222,514 1241,526";
const MID_CLOUD_TOP = "289,1030 307,1018 325,1016 343,1014 361,1013 379,1012 397,1034 415,1041 433,1042 451,1042 469,1040 487,1036 505,1037 523,1042 541,1045 559,1045 577,1045 595,1045 613,1038 631,1030 649,1028 667,1025 685,1022 700,1021 718,1023 736,1026 754,1004 772,1000 790,995 808,990 826,987 844,983 862,985 880,983 898,982 916,982 934,918 952,918 970,918 988,896 1006,893 1024,855 1042,843 1060,840 1078,835 1096,829 1114,823 1132,822 1150,817 1168,817 1186,823 1204,798 1222,791 1241,783";
const MID_CLOUD_BOT = "271,1040 300,1032 400,1034 600,1034 640,1038 660,1042 718,1042 736,1032 754,1012 920,1006 934,940 1012,940 1042,927 1078,908 1132,908 1150,898 1186,898 1204,868 1241,868";

const R_MACD_A = "57,290 115,211 136,220 157,217 178,221 200,247 220,170 241,140 262,126 283,145 325,195 346,203 367,208 410,248 430,229 472,211 493,211 516,229 556,188 577,240 598,282 619,320 640,334 682,349 703,338 724,366 787,377 808,366 829,330 850,320 871,313 892,220 913,150 934,123 955,106 976,65 1019,55";
const R_MACD_B = "57,334 115,253 136,243 178,228 200,237 220,206 262,158 288,154 325,174 367,193 410,226 430,226 451,219 493,213 516,221 535,217 556,206 577,216 619,270 640,297 682,331 703,331 724,343 766,364 808,366 829,351 871,329 892,288 934,190 976,117 997,94 1019,79";
const R_RSI = "57,541 73,530 94,499 115,482 136,547 157,520 178,517 200,577 220,455 241,472 262,466 283,522 304,536 325,530 346,509 367,499 388,534 410,544 430,476 451,469 472,458 493,454 514,501 535,448 556,428 577,612 598,633 619,637 640,620 661,613 682,604 703,559 724,674 745,628 766,646 787,625 808,600 829,538 850,559 871,553 892,437 913,415 934,445 955,436 976,403 997,427 1019,418";
const R_CLOUD_TOP = "535,1056 556,1052 577,1042 598,1030 619,1010 640,1000 661,997 682,993 703,983 724,985 745,952 766,952 787,949 808,935 829,934 850,920 871,916 892,915 913,913 934,915 955,903 976,892 997,890 1019,880";
const R_CLOUD_BOT = "514,1072 556,1060 598,1054 619,1039 682,1040 724,1033 745,1000 808,991 871,990 892,983 913,965 940,960 976,932 997,928 1019,928";

const WindowButtons = () => (
  <div className="ml-auto flex shrink-0 gap-px bg-black">
    {["M3 4h7L6.500 8z", "M3 8.500h6v2H3z", "M2 2h9v9H2zM4 5v4h5V5z", "M3 2l3 3 3-3 1 1-3 3 3 3-1 1-3-3-3 3-1-1 3-3-3-3z"].map((d, i) => (
      <button key={d} type="button" aria-label={["Menu", "Minimize", "Maximize", "Close"][i]} className="flex h-[13px] w-[12px] items-center justify-center border-t border-l border-white bg-[#d0d0c8]">
        <svg viewBox="0 0 13 13" className="size-[11px]"><path d={d} fillRule="evenodd" /></svg>
      </button>
    ))}
  </div>
);

const MatriksHeader = ({ cells, promo = false }: { cells: [string, string][]; promo?: boolean }) => (
  <header className="flex h-[14px] gap-[2px] border-t border-[#666] bg-black font-['Noto_Sans',sans-serif] text-[10px] leading-[13px] font-bold text-black">
    <svg viewBox="0 0 17 13" className="h-[13px] w-[17px] shrink-0 bg-[#d6d6cc]">
      <path d="M2 10V4h12v6M8 4v6" fill="none" stroke="#222" strokeWidth={2} />
      <path d="M2 12h13M4 1h12" stroke="#f04040" strokeDasharray="1 1" />
    </svg>
    <svg viewBox="0 0 17 13" className="h-[13px] w-[17px] shrink-0 bg-[#d6d6cc]">
      <path d="M2 2v5M4 3v6M9 6v5M11 4v7M13 3v8M15 4v6" stroke="#f00" strokeWidth={1.2} />
      <path d="M0 3q4 9 7 6t4-7 6 6" fill="none" stroke="#00f" />
    </svg>
    {cells.map(([t, w], i) => (
      <span key={t} className={clsx("shrink-0 bg-[#d6d6cc]", w, i === 0 ? "pl-1" : "text-center", t === "KHN" && "text-[#0000ff]")}>
        {t}
      </span>
    ))}
    {promo && <span className="-ml-[2px] w-[5px] shrink-0 bg-[#ff8000]" />}
    <span className="relative h-[13px] min-w-0 flex-1 bg-[#e2e2e0] text-center font-['DejaVu_Sans',sans-serif] text-[17px] leading-[11px] font-extralight">
      matriks
      <span className="absolute top-0 right-4 w-8 border-t-2 border-dotted border-[#ff5a10]" />
    </span>
    <WindowButtons />
  </header>
);

const CornerBox = () => (
  <button type="button" aria-label="Expand panel" className="absolute top-[15px] right-0 flex size-3 items-center justify-center border border-[#eee] border-r-[#777] border-b-[#777] bg-[#d0d0c8]">
    <span className="size-[6px] border border-black" />
  </button>
);

const RefreshIcon = () => (
  <svg viewBox="0 0 18 18" className="size-[19px] border border-white bg-[#d8dce8]">
    <path d="M3 8a6 6 0 0110-4l2-1v5h-5l2-2a4 4 0 00-6 2zM15 10a6 6 0 01-10 4l-2 1v-5h5l-2 2a4 4 0 006-2z" fill="#30a848" stroke="#187030" strokeWidth={0.6} />
  </svg>
);

const Footer = ({ marks, days, plotWidth, thumb }: { marks: number[]; days: [number, string][]; plotWidth: string; thumb: string }) => (
  <footer className="flex h-[29px] justify-between bg-black">
    <div className={clsx("flex flex-col justify-between", plotWidth)}>
      <div className="flex h-[19px] pt-px">
        <div className="flex h-[18px] w-[140px] shrink-0 items-center justify-center border-2 border-t-[#666] border-r-white border-b-white border-l-[#666] font-['DejaVu_Sans',Verdana,sans-serif] text-[11px] font-bold whitespace-nowrap text-[#ffff00]">
          1,3386 - 4 - 22:25:32
        </div>
        <svg className="h-[19px] min-w-0 flex-1 overflow-visible font-['Noto_Sans',sans-serif] text-[12px]">
          {marks.map((x) => <rect key={x} x={x} y={0} width={3} height={6} fill="#00ffff" />)}
          {days.map(([x, t]) => (
            <g key={t}>
              <rect x={x} y={1} width={1} height={18} fill="#fff" />
              <text x={x + 2} y={16} fill="#00ffff">{t}</text>
            </g>
          ))}
        </svg>
      </div>
      <div className="flex h-[9px] justify-between bg-white">
        <button type="button" aria-label="Scroll left" className="flex w-4 items-center justify-center border border-[#999] bg-[#e8e8e8]">
          <span className="border-y-2 border-r-2 border-y-transparent border-r-black" />
        </button>
        <div className={clsx("ml-auto border border-[#999] bg-[#eee]", thumb)} />
        <button type="button" aria-label="Scroll right" className="flex w-[17px] items-center justify-center border border-[#999] bg-[#e8e8e8]">
          <span className="border-y-2 border-l-2 border-y-transparent border-l-black" />
        </button>
      </div>
    </div>
    <div className="flex items-end gap-px pr-px">
      <RefreshIcon />
      {["M8 1v8L2 5z", "M3 1v8l6-4z"].map((d, i) => (
        <button key={d} type="button" aria-label={i ? "Next" : "Previous"} className="size-[11px] border border-white bg-[#d0d0c8]">
          <svg viewBox="0 0 10 10" className="size-[9px]"><path d={d} fill="#0000e0" /></svg>
        </button>
      ))}
    </div>
  </footer>
);

const HourlyWindow = () => {
  const base = { x0: 39, width: 489, axis: 1318, cross: 271, verticals: [415, 844] };
  return (
    <div className="flex min-w-0 flex-[504] flex-col bg-[#a9a9a9]">
      <div className="mr-[126px] h-[7px] border-r-2 border-[#777] bg-[#f6f8fb]" />
      <div className="border-t border-r-2 border-b-2 border-t-white border-r-[#777] border-b-[#777] bg-[#f3f6fa] pt-[7px] pr-[6px] pb-[7px] pl-[5px]">
        <div className="relative">
          <MatriksHeader
            promo
            cells={[["EURUSD", "w-[80px]"], ["60", "w-[33px]"], ["TL", "w-[43px]"], ["LIN", "w-[33px]"], ["KHN", "w-[28px]"], ["SVD", "w-[27px]"], ["SYM", "w-[26px]"], ["TMP", "w-[25px]"]]}
          />
          <CornerBox />
          <Panel
            {...base}
            y0={120}
            height={443}
            frame="border-[#80e880]"
            ticks={[[137, "1,345"], [287, "1,34"], [437, "1,335"], [587, "1,33"], [737, "1,325"], [890, "1,32"], [1040, "1,315"], [1190, "1,31"], [1340, "1,305"]]}
            minor={[212, 362, 512, 662, 812, 965, 1115, 1265, 1415]}
            extra={<text x={430} y={74} fill="#ffff00">1,3386</text>}
          >
            <HourlyPlot />
          </Panel>
          <Panel
            {...base}
            y0={45}
            height={114}
            title="MA.Conv.Div"
            ticks={[[86, "0,004"], [149, "0,003"], [212, "0,002"], [275, "0,001"], [338, "0"]]}
            minor={[55, 116, 179, 242, 307, 370]}
          >
            <path d="M39 338H1318" stroke="#990000" shapeRendering="crispEdges" />
            <TrendLine pts={MID_MACD_A} />
            <TrendLine pts={MID_MACD_B} />
          </Panel>
          <Panel {...base} y0={393} height={99} title="RSI" ticks={[[440, "80"], [545, "60"], [650, "40"]]} minor={[493, 598]}>
            <path d="M39 490H1318" stroke="#990000" shapeRendering="crispEdges" />
            <TrendLine pts={MID_RSI} />
          </Panel>
          <Panel
            {...base}
            y0={696}
            height={126}
            title="Ichi Moku"
            ticks={[[731, "1,34"], [824, "1,33"], [916, "1,32"], [1009, "1,31"]]}
            minor={[776, 962, 1054]}
          >
            <Hatch top="55,1018 73,1018 91,1020 109,1021 127,1020 145,1018 163,1018 181,1018 199,1030" bottom="39,1060 100,1056 127,1053 190,1053 220,1050" color="#ff0000" />
            <Hatch top={MID_CLOUD_TOP} bottom={MID_CLOUD_BOT} color="#00ff00" />
            <Line pts={"39,1060 70,1058 100,1054 190,1053 220,1048 250,1046 271,1040 " + MID_CLOUD_TOP} color="#00ff00" />
            <Line pts="39,1018 181,1018 199,1030 217,1045 253,1048 271,1040" color="#ff0000" />
            <Line pts={MID_CLOUD_BOT} color="#ff0000" />
            <Line pts="39,1024 60,1018 90,1018 127,1030 145,1015 163,978 181,972 199,978 225,985 250,980 289,977 307,985 325,972 343,874 361,883 379,857 397,866 415,865 433,842 451,818 469,833 487,829 538,829 557,802 575,823 592,815 610,755 628,751 646,757 664,752 682,712 700,722 718,742 736,760 754,748 773,739" color="#c8c8c8" />
            <Line pts="39,1050 80,1042 127,1030 163,1014 205,1004 235,1012 253,1040 280,1048 320,1042 343,1033 361,1036 379,1044 460,1044 487,1028 540,1019 592,1022 610,1004 628,1004 660,978 680,983 772,983 790,918 826,917 844,868 862,866 880,850 916,840 934,826 952,822 1006,821 1042,821 1060,796 1078,794 1096,782 1114,757 1132,730 1168,726 1186,737 1204,742 1222,757 1241,758" color="#0080ff" w={6} />
            <Line pts="39,1054 80,1052 127,1046 163,1017 253,1010 271,1034 289,1044 350,1044 375,1034 395,1044 480,1045 500,1032 592,1026 610,1026 628,1003 685,1001 703,985 790,983 808,918 880,918 898,858 916,846 934,840 970,840 988,825 1042,816 1060,822 1078,795 1132,791 1150,762 1168,728 1220,732 1241,740" color="#ff0000" w={6} />
            <Line pts="39,1042 90,1038 127,1030 145,1008 163,1000 181,1014 217,1016 235,1028 253,1062 271,1048 289,1024 307,1034 361,1044 397,1042 451,1044 469,1032 487,1018 541,1018 557,1012 575,1026 592,1018 610,978 628,973 664,985 736,980 754,985 772,976 790,874 808,882 826,857 844,866 862,865 880,842 898,817 916,832 988,828 1006,803 1024,822 1042,815 1060,755 1096,757 1114,752 1132,712 1150,724 1168,742 1186,759 1204,745 1222,738 1241,742" color="#ffff00" />
          </Panel>
          <Footer marks={[44, 74, 80]} days={[[129, "22"]]} plotWidth="w-[427px]" thumb="w-[22px]" />
        </div>
      </div>
      <div className="mr-[108px] ml-[8px] flex h-2 overflow-hidden border-r-2 border-white bg-black font-['Noto_Sans',sans-serif] text-[12px] leading-[11px] text-[#00ffff]">
        <span className="w-[146px] font-['DejaVu_Sans',sans-serif] text-[11px] leading-[8px] font-bold whitespace-nowrap text-[#ffff00]">
          1290,33 - 1 - 22:25:32
        </span>
        {["16", "17", "18", "19", "20", "21", "22"].map((d) => (
          <span key={d} className="w-6 border-l border-white pl-[2px]">{d}</span>
        ))}
        <svg viewBox="0 0 18 8" className="ml-4 h-2 w-[18px] bg-[#d8dce8]">
          <path d="M3 8a6 6 0 0110-3l2-1v4h-5l-1-1q-2-1-3 1z" fill="#30a848" />
        </svg>
      </div>
    </div>
  );
};

const FourHourWindow = () => {
  const base = { x0: 54, width: 404, axis: 1075, cross: 262, verticals: [136, 388, 514, 640, 661, 787, 913] };
  return (
    <div className="flex min-w-0 flex-[422] flex-col bg-[#a9a9a9]">
      <div className="ml-[120px] h-[5px] border-b-2 border-white" />
      <div className="flex bg-black">
        <div className="mr-[2px] min-w-0 flex-1 border-t border-r-2 border-b-2 border-t-white border-r-[#777] border-b-[#777] bg-[#f3f6fa] px-[6px] pt-[7px] pb-[6px]">
          <div className="relative">
            <MatriksHeader cells={[["EURUSD", "w-[80px]"], ["240", "w-[33px]"], ["TL", "w-[43px]"], ["LIN", "w-[33px]"], ["KHN", "w-[28px]"]]} />
            <CornerBox />
            <Panel
              {...base}
              y0={114}
              height={443}
              ticks={[[238, "1,34"], [424, "1,33"], [610, "1,32"], [799, "1,31"], [985, "1,3"], [1174, "1,29"], [1360, "1,28"]]}
              minor={[142, 331, 517, 706, 892, 1081, 1267]}
              extra={
                <>
                  <rect x={343} y={43} width={45} height={12} fill="#000" />
                  <text x={343} y={54} fill="#ffff00">1,3386</text>
                </>
              }
            >
              <FourHourPlot />
            </Panel>
            <Panel
              {...base}
              y0={39}
              height={115}
              title="MA.Conv.Div"
              ticks={[[34, "0,008"], [125, "0,006"], [214, "0,004"], [307, "0,002"]]}
              minor={[80, 170, 262, 352]}
            >
              <TrendLine pts={R_MACD_A} />
              <TrendLine pts={R_MACD_B} />
            </Panel>
            <Panel {...base} y0={390} height={98} title="RSI" ticks={[[442, "80"], [517, "70"], [590, "60"], [664, "50"]]} minor={[406, 479, 553, 628]}>
              <path d="M54 517H1075" stroke="#990000" shapeRendering="crispEdges" />
              <TrendLine pts={R_RSI} />
            </Panel>
            <Panel
              {...base}
              y0={690}
              height={134}
              title="Ichi Moku"
              ticks={[[701, "1,34"], [808, "1,32"], [913, "1,3"], [1021, "1,28"]]}
              minor={[754, 860, 967, 1075]}
            >
              <Hatch top="115,1021 136,1021 157,1021 178,1027 199,1027 220,1027 241,1027 262,1027 283,1027 304,1032 325,1032 346,1033 367,1040 388,1051" bottom="73,1030 115,1054 157,1068 199,1076 225,1068 340,1069 367,1064 412,1080" color="#ff0000" />
              <Hatch top={R_CLOUD_TOP} bottom={R_CLOUD_BOT} color="#00ff00" />
              <Line pts="57,1003 100,1018 157,1021 178,1027 285,1027 304,1032 346,1033 367,1040 388,1051 430,1068 470,1072 514,1072" color="#ff0000" />
              <Line pts={"57,1015 94,1036 115,1054 136,1057 163,1069 200,1076 225,1068 340,1069 370,1063 390,1066 410,1081 430,1074 450,1078 480,1074 514,1070 " + R_CLOUD_TOP} color="#00ff00" />
              <Line pts={R_CLOUD_BOT} color="#ff0000" />
              <Line pts="57,884 94,889 115,881 157,879 178,862 199,891 220,874 262,876 285,867 304,844 346,847 367,773 388,752 430,752 451,712 472,718" color="#3a3a3a" />
              <Line pts="57,1036 94,1000 136,990 178,980 199,985 220,950 262,947 283,918 325,922 346,913 412,912 430,900 472,889 493,872 556,857 598,861 625,870 640,885 682,885 703,870 766,878 808,876 829,862 871,855 892,806 934,800 955,762 976,738 1019,715" color="#0080ff" w={6} />
              <Line pts="57,1049 94,1044 136,1002 178,998 199,984 223,984 241,950 325,948 346,916 434,914 472,888 538,887 556,862 577,857 619,863 682,866 703,882 724,870 808,876 832,880 850,868 892,859 913,820 955,802 976,796 997,778 1019,731" color="#ff0000" w={6} />
              <Line pts="57,1012 73,1006 115,977 136,992 178,976 199,990 220,911 262,912 285,926 325,928 367,908 412,918 430,884 493,872 514,880 535,848 556,837 577,878 619,889 640,880 682,879 703,862 724,890 745,874 787,877 808,870 829,845 871,848 892,772 913,751 955,752 976,713 997,718 1019,706" color="#ffff00" />
            </Panel>
            <Footer marks={[26, 33, 68, 75, 89, 117, 124, 131]} days={[[13, "17"], [62, "20"], [104, "21"], [146, "22"]]} plotWidth="w-[342px]" thumb="w-[60px]" />
            <svg viewBox="0 0 70 50" className="pointer-events-none absolute top-0 left-[262px] h-[50px] w-[70px]">
              <path d="M53 7l3 8h8l-6 5 3 8-8-5-8 5 3-8-6-5h8z" fill="none" stroke="#ff00ff" strokeWidth={2.500} />
              <path d="M9 34l30 5" stroke="#ff9800" strokeWidth={3} />
              <path d="M39 32l15 11-17 4z" fill="#ff9800" />
            </svg>
          </div>
        </div>
      </div>
    </div>
  );
};

export default function App() {
  return (
    <main className="flex h-screen overflow-hidden bg-[#a9a9a9]">
      <Gannalyst />
      <div className="flex min-w-0 flex-[926] flex-col">
        <div className="h-[19px] border-b border-[#999] bg-[linear-gradient(60deg,#000_60%,#0d0d0d_70%,#050505_85%,#000)]" />
        <div className="h-[28px] border-t border-white bg-[#e3e3d8]" />
        <div className="h-[3px] border-b-2 border-[#707070] bg-[#a9a9a9]" />
        <div className="flex flex-1">
          <HourlyWindow />
          <FourHourWindow />
        </div>
      </div>
    </main>
  );
}
